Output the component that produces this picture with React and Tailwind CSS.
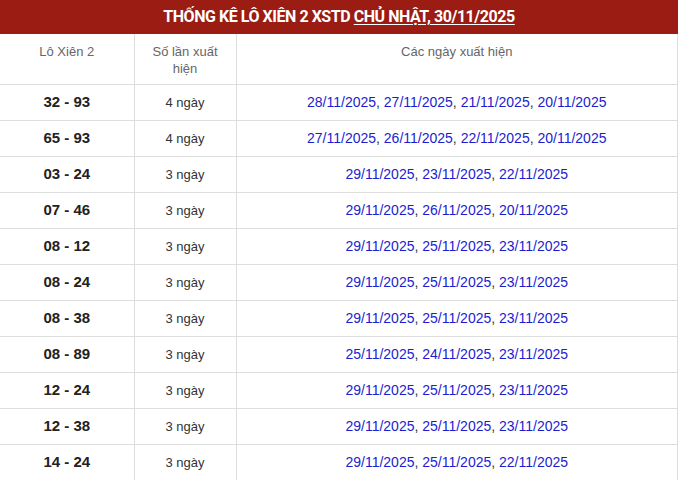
import React from "react";

const rows = [
  { pair: "32 - 93", count: 4, dates: ["28/11/2025", "27/11/2025", "21/11/2025", "20/11/2025"] },
  { pair: "65 - 93", count: 4, dates: ["27/11/2025", "26/11/2025", "22/11/2025", "20/11/2025"] },
  { pair: "03 - 24", count: 3, dates: ["29/11/2025", "23/11/2025", "22/11/2025"] },
  { pair: "07 - 46", count: 3, dates: ["29/11/2025", "26/11/2025", "20/11/2025"] },
  { pair: "08 - 12", count: 3, dates: ["29/11/2025", "25/11/2025", "23/11/2025"] },
  { pair: "08 - 24", count: 3, dates: ["29/11/2025", "25/11/2025", "23/11/2025"] },
  { pair: "08 - 38", count: 3, dates: ["29/11/2025", "25/11/2025", "23/11/2025"] },
  { pair: "08 - 89", count: 3, dates: ["25/11/2025", "24/11/2025", "23/11/2025"] },
  { pair: "12 - 24", count: 3, dates: ["29/11/2025", "25/11/2025", "23/11/2025"] },
  { pair: "12 - 38", count: 3, dates: ["29/11/2025", "25/11/2025", "23/11/2025"] },
  { pair: "14 - 24", count: 3, dates: ["29/11/2025", "25/11/2025", "22/11/2025"] },
];

const App = () => {
  return (
    <div className="w-[678px] h-[480px] overflow-hidden bg-white font-['Liberation_Sans',Arial,sans-serif]">
      <div className="h-[34px] bg-[#9a1c12] flex items-center justify-center text-white font-bold text-[16px] tracking-[-0.45px] font-['Roboto',sans-serif]">
        <span>
          THỐNG KÊ LÔ XIÊN 2 XSTD <span className="underline underline-offset-2">CHỦ NHẬT, 30/11/2025</span>
        </span>
      </div>
      <table className="w-[678px] border-collapse table-fixed">
        <colgroup>
          <col className="w-[134px]" />
          <col className="w-[102px]" />
          <col />
        </colgroup>
        <thead>
          <tr className="h-[50px] text-[13px] text-[#666] leading-[17px]">
            <th className="border-r border-b border-[#ddd] font-normal align-top pt-[9px]">Lô Xiên 2</th>
            <th className="border-r border-b border-[#ddd] font-normal align-top pt-[9px] px-4">Số lần xuất hiện</th>
            <th className="border-r border-b border-[#ddd] font-normal align-top pt-[9px]">Các ngày xuất hiện</th>
          </tr>
        </thead>
        <tbody>
          {rows.map((r) => (
            <tr key={r.pair} className="h-[36px]">
              <td className="border-r border-b border-[#ddd] text-center font-bold text-[15px] text-[#222] pt-px">{r.pair}</td>
              <td className="border-r border-b border-[#ddd] text-center text-[13px] text-[#333] pt-px">{r.count} ngày</td>
              <td className="border-r border-b border-[#ddd] text-center text-[14px] text-[#333] pt-px">
                {r.dates.map((d, i) => (
                  <React.Fragment key={d + i}>
                    {i > 0 && ", "}
                    <span className="text-[#1c1cd0]">{d}</span>
                  </React.Fragment>
                ))}
              </td>
            </tr>
          ))}
        </tbody>
      </table>
    </div>
  );
};

export default App;
